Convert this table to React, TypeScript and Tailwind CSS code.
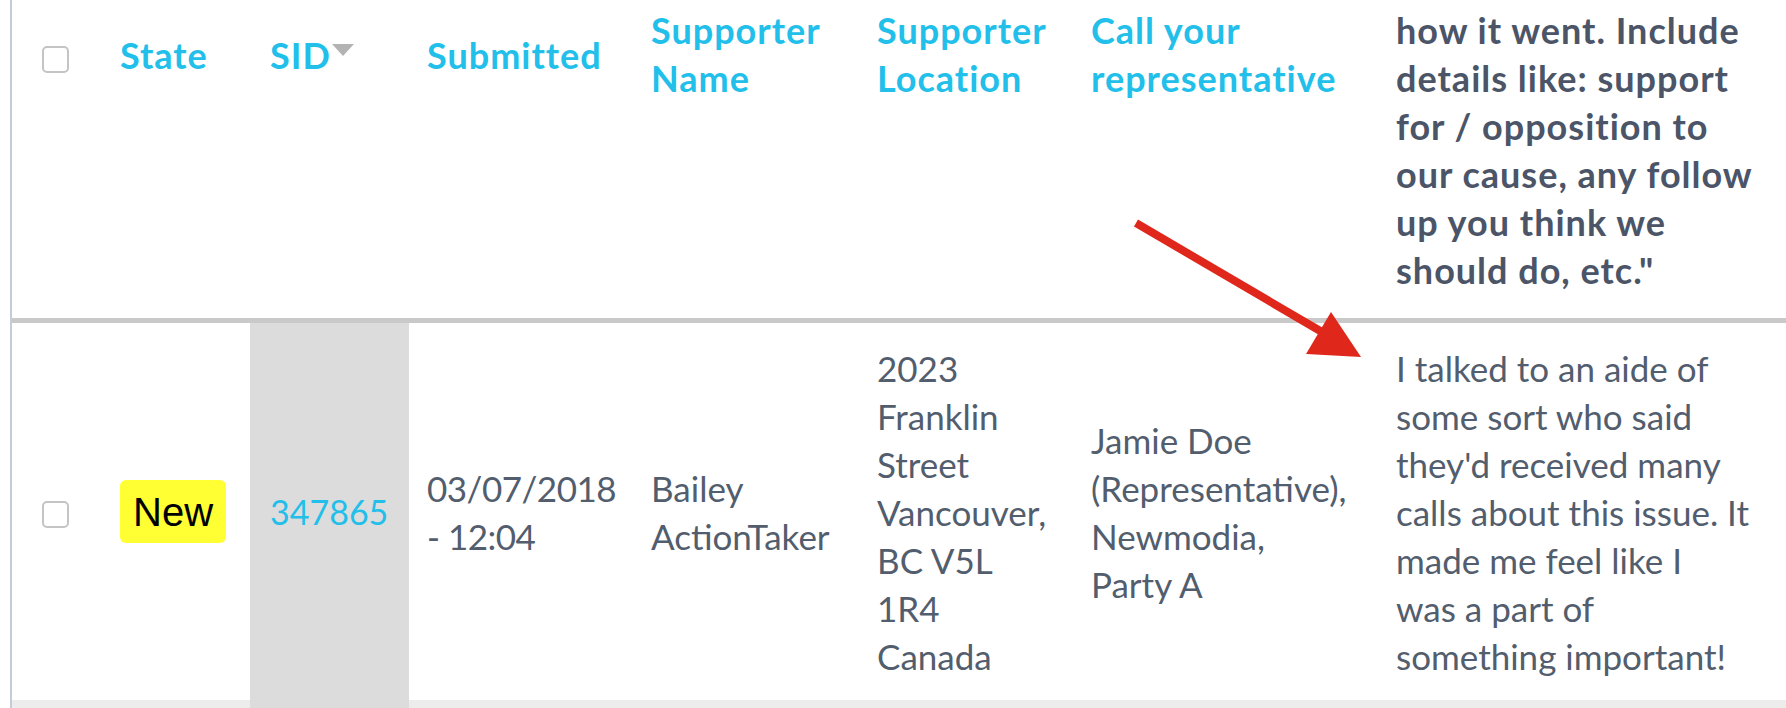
import React from "react";

const FONT = { fontFamily: "Lato, 'Open Sans', sans-serif" };

function Checkbox() {
  return <div className="w-[27px] h-[27px] rounded-[5px] border-2 border-[#c4c4c4] bg-white" />;
}

function Lines({ lines, className = "" }: { lines: string[]; className?: string }) {
  return (
    <div className={className}>
      {lines.map((l, i) => (
        <div key={i} className="whitespace-nowrap">
          {l}
        </div>
      ))}
    </div>
  );
}

export default function App() {
  return (
    <div
      className="relative w-[1786px] h-[708px] overflow-hidden bg-white flex"
      style={FONT}
    >
      <div className="w-[10px] shrink-0 bg-white" />
      <div className="w-[2px] shrink-0 bg-[#c3ccda]" />
      <div className="flex flex-col flex-1">
        {/* Header */}
        <div className="flex h-[318px] text-[36px] leading-[48px] tracking-[1px] font-bold text-[#22bfea]">
          <div className="w-[90px] shrink-0 pl-[30px] pt-[46px]">
            <Checkbox />
          </div>
          <div className="w-[148px] shrink-0 pl-[18px] pt-[6px] h-[104px] flex items-center">State</div>
          <div className="w-[159px] shrink-0 pl-[20px] pt-[6px] h-[104px] flex items-center">
            <span>SID</span>
            <svg width="22" height="12" viewBox="0 0 22 12" className="self-start mt-[38px] ml-[1px]">
              <polygon points="0,0 22,0 11,12" fill="#b3b3b3" />
            </svg>
          </div>
          <div className="w-[224px] shrink-0 pl-[18px] pt-[6px] h-[104px] flex items-center">Submitted</div>
          <div className="w-[226px] shrink-0 pl-[18px] pt-[6px]">
            <Lines lines={["Supporter", "Name"]} />
          </div>
          <div className="w-[214px] shrink-0 pl-[18px] pt-[6px]">
            <Lines lines={["Supporter", "Location"]} />
          </div>
          <div className="w-[305px] shrink-0 pl-[18px] pt-[6px]">
            <Lines lines={["Call your", "representative"]} />
          </div>
          <div className="flex-1 pl-[18px] pt-[6px] text-[#4b5567]">
            <Lines
              lines={[
                "how it went. Include",
                "details like: support",
                "for / opposition to",
                "our cause, any follow",
                "up you think we",
                'should do, etc."',
              ]}
            />
          </div>
        </div>
        <div className="h-[5px] bg-[#c9c9c9]" />
        {/* Data row */}
        <div className="flex h-[377px] text-[35px] leading-[48px] text-[#525d6d]">
          <div className="w-[90px] shrink-0 pl-[30px] pt-[6px] flex items-center">
            <Checkbox />
          </div>
          <div className="w-[148px] shrink-0 pl-[18px] flex items-center">
            <div
              className="h-[63px] px-[13px] flex items-center rounded-[6px] bg-[#ffff33] text-black text-[40px]"
              style={{ fontFamily: "'Liberation Sans', Arial, sans-serif" }}
            >
              New
            </div>
          </div>
          <div className="w-[159px] shrink-0 pl-[20px] flex items-center bg-[#dcdcdc] text-[#22bfea] text-[34px]">
            347865
          </div>
          <div className="w-[224px] shrink-0 pl-[18px] flex items-center tracking-[-0.5px]">
            <Lines lines={["03/07/2018", "- 12:04"]} />
          </div>
          <div className="w-[226px] shrink-0 pl-[18px] flex items-center">
            <Lines lines={["Bailey", "ActionTaker"]} />
          </div>
          <div className="w-[214px] shrink-0 pl-[18px] flex items-center">
            <Lines lines={["2023", "Franklin", "Street", "Vancouver,", "BC V5L", "1R4", "Canada"]} />
          </div>
          <div className="w-[305px] shrink-0 pl-[18px] flex items-center">
            <Lines lines={["Jamie Doe", "(Representative),", "Newmodia,", "Party A"]} />
          </div>
          <div className="flex-1 pl-[18px] flex items-center">
            <Lines
              lines={[
                "I talked to an aide of",
                "some sort who said",
                "they'd received many",
                "calls about this issue. It",
                "made me feel like I",
                "was a part of",
                "something important!",
              ]}
            />
          </div>
        </div>
        {/* Bottom strip */}
        <div className="flex h-[8px] bg-[#ececec]">
          <div className="w-[238px] shrink-0" />
          <div className="w-[159px] shrink-0 bg-[#dcdcdc]" />
        </div>
      </div>
      {/* Annotation arrow */}
      <svg className="absolute left-0 top-0 pointer-events-none" width="1786" height="708">
        <line x1="1136" y1="223" x2="1322" y2="332" stroke="#e0271b" strokeWidth="8" />
        <polygon points="1331,312 1306,354 1361,357" fill="#e0271b" />
      </svg>
    </div>
  );
}
